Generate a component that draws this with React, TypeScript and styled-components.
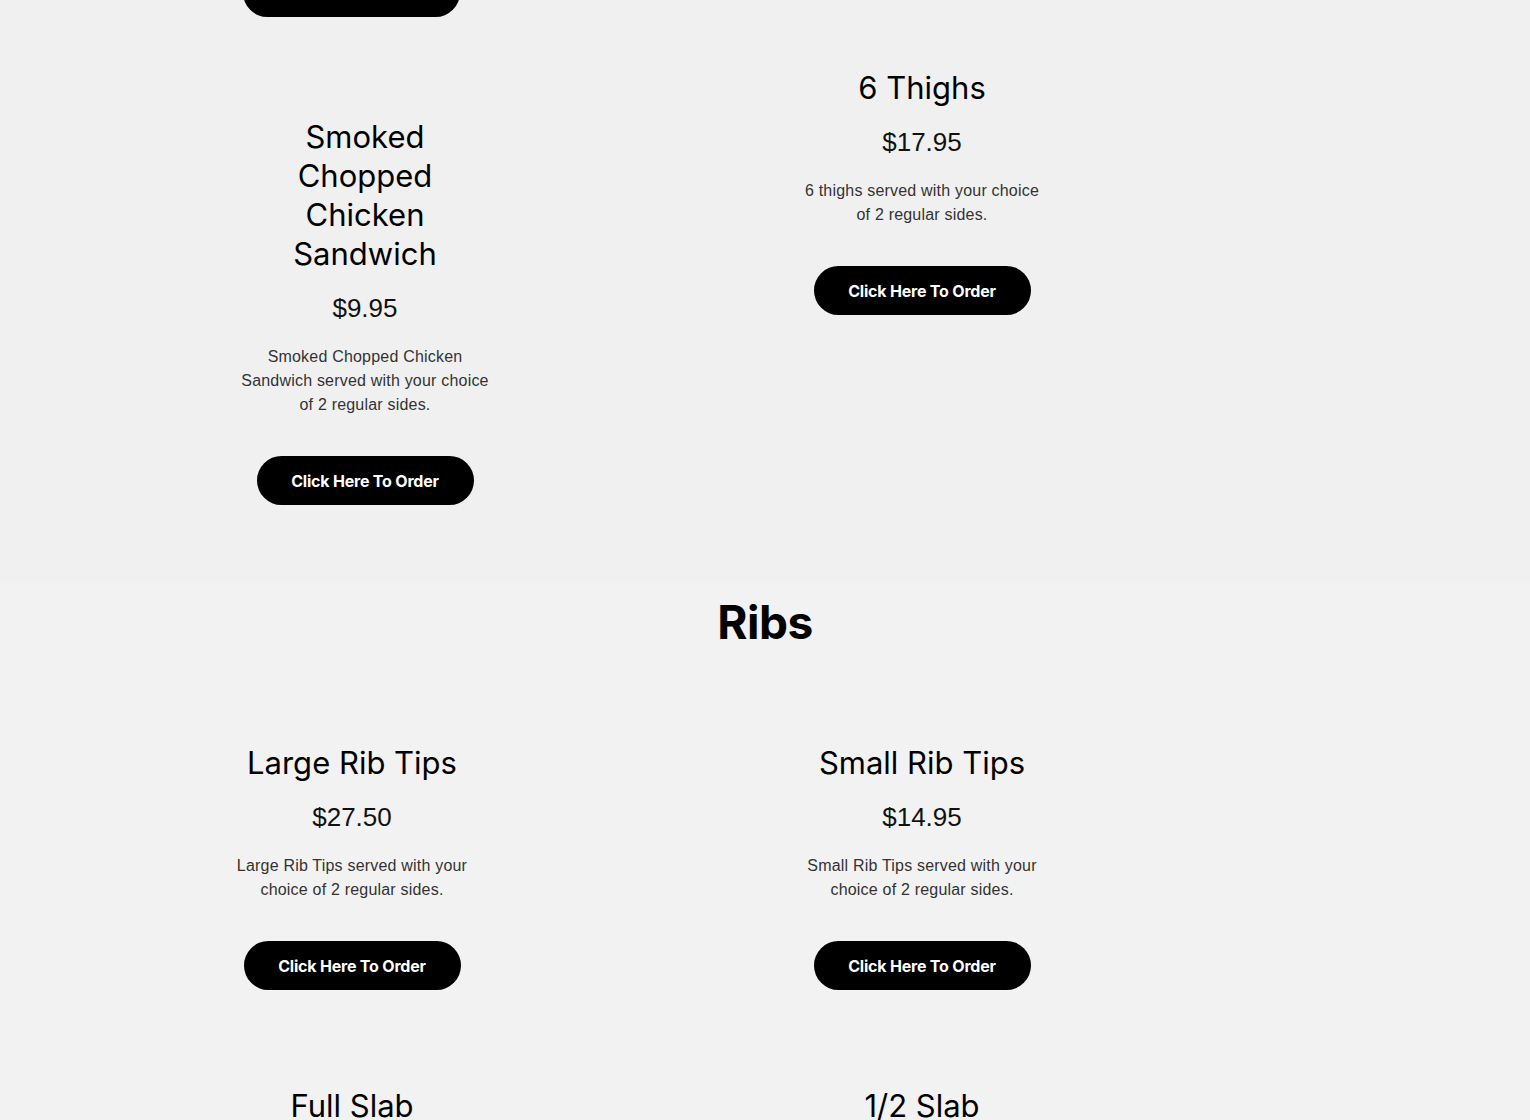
import styled, { createGlobalStyle } from 'styled-components';

const GlobalStyle = createGlobalStyle`
  html, body {
    margin: 0;
    padding: 0;
    background: #f0f0f0;
  }
  body {
    font-family: 'Liberation Sans', Arial, sans-serif;
    overflow: hidden;
  }
`;

const Page = styled.div`
  width: 1530px;
  min-height: 1120px;
  margin-top: -32px;
`;

const Section = styled.section<{ $tone: string; $pad: string }>`
  background: ${({ $tone }) => $tone};
  padding: ${({ $pad }) => $pad};
`;

const Container = styled.div`
  width: 1140px;
  margin: 0 auto;
`;

const Columns = styled.div`
  display: grid;
  grid-template-columns: 570px 570px;
  align-items: start;
`;

const Column = styled.div<{ $lead?: number }>`
  display: flex;
  flex-direction: column;
  align-items: flex-start;
  gap: 100px;
  padding-top: ${({ $lead }) => $lead ?? 0}px;
`;

const Grid = styled.div`
  display: grid;
  grid-template-columns: 570px 570px;
  row-gap: 96px;
`;

const SectionTitle = styled.h2`
  margin: 0 0 93px;
  text-align: center;
  font-family: Inter, 'Noto Sans', sans-serif;
  font-weight: 700;
  font-size: 46px;
  line-height: 55px;
  letter-spacing: -0.5px;
  color: #000;
`;

const Card = styled.div<{ $shift?: number }>`
  width: 314px;
  box-sizing: border-box;
  padding: 0 27px;
  margin-left: ${({ $shift }) => $shift ?? 0}px;
  display: flex;
  flex-direction: column;
  align-items: center;
  text-align: center;
`;

const ItemName = styled.h3<{ $wrap?: number }>`
  margin: 0;
  max-width: ${({ $wrap }) => ($wrap ? `${$wrap}px` : 'none')};
  font-family: Inter, 'Noto Sans', sans-serif;
  font-weight: 400;
  font-size: 31px;
  line-height: 39px;
  color: #000;
  white-space: ${({ $wrap }) => ($wrap ? 'normal' : 'nowrap')};
`;

const Price = styled.div`
  margin-top: 20px;
  font-family: 'Liberation Sans', Arial, sans-serif;
  font-size: 26px;
  line-height: 31px;
  color: #111;
`;

const Description = styled.p`
  margin: 21px 0 0;
  width: 252px;
  font-family: 'Liberation Sans', Arial, sans-serif;
  font-size: 16px;
  line-height: 24px;
  letter-spacing: 0.2px;
  color: #333;
`;

const OrderButton = styled.a`
  display: flex;
  align-items: center;
  justify-content: center;
  width: 217px;
  height: 49px;
  margin-top: 39px;
  border-radius: 25px;
  background: #000;
  color: #fff;
  font-family: Inter, 'Noto Sans', sans-serif;
  font-weight: 700;
  font-size: 16px;
  letter-spacing: -0.2px;
  text-decoration: none;
  cursor: pointer;
`;

const Tail = styled(OrderButton)`
  margin: 0 0 0 48px;
`;

type Item = { name: string; price: string; text: string };

const MenuCard = ({ item, shift, wrap }: { item: Item; shift?: number; wrap?: number }) => (
  <Card $shift={shift}>
    <ItemName $wrap={wrap}>{item.name}</ItemName>
    <Price>{item.price}</Price>
    <Description>{item.text}</Description>
    <OrderButton>Click Here To Order</OrderButton>
  </Card>
);

const sandwich: Item = {
  name: 'Smoked Chopped Chicken Sandwich',
  price: '$9.95',
  text: 'Smoked Chopped Chicken Sandwich served with your choice of 2 regular sides.',
};

const thighs: Item = {
  name: '6 Thighs',
  price: '$17.95',
  text: '6 thighs served with your choice of 2 regular sides.',
};

const ribs: Item[] = [
  { name: 'Large Rib Tips', price: '$27.50', text: 'Large Rib Tips served with your choice of 2 regular sides.' },
  { name: 'Small Rib Tips', price: '$14.95', text: 'Small Rib Tips served with your choice of 2 regular sides.' },
  { name: 'Full Slab', price: '$29.95', text: 'Full Slab served with your choice of 2 regular sides.' },
  { name: '1/2 Slab', price: '$17.95', text: '1/2 Slab served with your choice of 2 regular sides.' },
];

export default function App() {
  return (
    <Page>
      <GlobalStyle />
      <Section $tone="#f0f0f0" $pad="0 0 78px">
        <Container>
          <Columns>
            <Column>
              <Tail>Click Here To Order</Tail>
              <MenuCard item={sandwich} shift={13} wrap={170} />
            </Column>
            <Column $lead={100}>
              <MenuCard item={thighs} />
            </Column>
          </Columns>
        </Container>
      </Section>
      <Section $tone="#f2f2f2" $pad="12px 0 80px">
        <Container>
          <SectionTitle>Ribs</SectionTitle>
          <Grid>
            {ribs.map((item) => (
              <MenuCard key={item.name} item={item} />
            ))}
          </Grid>
        </Container>
      </Section>
    </Page>
  );
}
